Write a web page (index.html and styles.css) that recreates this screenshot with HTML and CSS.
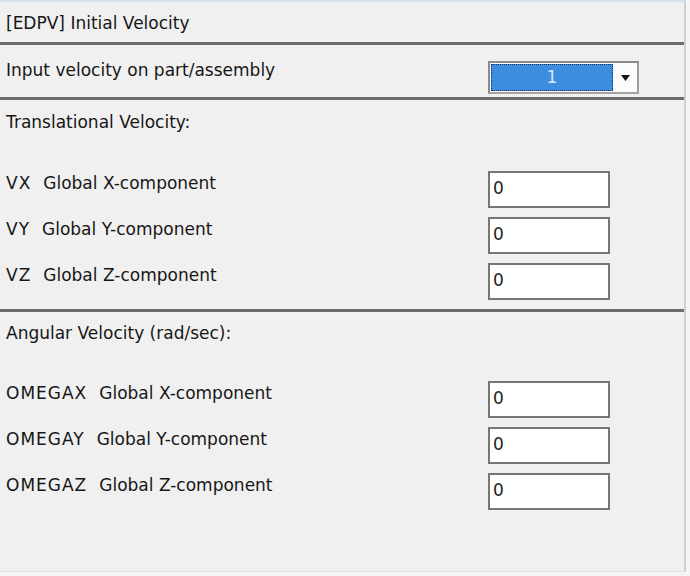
FILE: index.html
```html
<!DOCTYPE html>
<html lang="en">
<head>
<meta charset="utf-8">
<title>[EDPV] Initial Velocity</title>
<link rel="stylesheet" href="styles.css">
</head>
<body>
<div class="panel">
  <div class="title">[EDPV] Initial Velocity</div>
  <div class="sep"></div>
  <div class="part-row">
    <div class="part-label">Input velocity on part/assembly</div>
    <div class="combo">
      <div class="combo-value">1</div>
      <div class="combo-btn">
        <svg width="9" height="6" viewBox="0 0 9 6"><path d="M0 0H9L4.5 6Z" fill="#111"/></svg>
      </div>
    </div>
  </div>
  <div class="sep"></div>
  <div class="group">
    <div class="group-head">Translational Velocity:</div>
    <div class="rows">
      <div class="label"><span class="code">VX</span>Global X-component</div><div class="field">0</div>
      <div class="label"><span class="code">VY</span>Global Y-component</div><div class="field">0</div>
      <div class="label"><span class="code">VZ</span>Global Z-component</div><div class="field">0</div>
    </div>
  </div>
  <div class="sep"></div>
  <div class="group group-last">
    <div class="group-head">Angular Velocity (rad/sec):</div>
    <div class="rows">
      <div class="label"><span class="code">OMEGAX</span>Global X-component</div><div class="field">0</div>
      <div class="label"><span class="code">OMEGAY</span>Global Y-component</div><div class="field">0</div>
      <div class="label"><span class="code">OMEGAZ</span>Global Z-component</div><div class="field">0</div>
    </div>
  </div>
</div>
</body>
</html>
```
FILE: styles.css
```css
html, body {
  margin: 0;
  padding: 0;
  background: #f5f5f5;
}
body {
  font-family: "DejaVu Sans", sans-serif;
  font-size: 17px;
  color: #161616;
}
.panel {
  width: 686px;
  height: 572px;
  box-sizing: border-box;
  border-top: 2px solid #d6e0ea;
  border-right: 2px solid #cfcfcf;
  border-bottom: 1px solid #e2e2e2;
  background: #f0f0f0;
  display: flex;
  flex-direction: column;
}
.title {
  height: 40px;
  box-sizing: border-box;
  padding: 10px 0 0 6px;
  line-height: 22px;
}
.sep {
  height: 3px;
  background: #6b6b6b;
  flex: none;
}
.part-row {
  height: 52px;
  box-sizing: border-box;
  display: flex;
  align-items: flex-start;
  padding-left: 6px;
}
.part-label {
  width: 482px;
  padding-top: 14px;
  line-height: 22px;
}
.combo {
  margin-top: 16px;
  width: 151px;
  height: 33px;
  box-sizing: border-box;
  border: 2px solid #8a8a8a;
  border-right-color: #9d9d9d;
  border-bottom-color: #a3a3a3;
  background: #fbfbfb;
  padding: 1px 0 1px 1px;
  display: flex;
}
.combo-value {
  flex: 1;
  background: #3c8de0;
  border: 1px dotted #1b2b4c;
  color: #d6eaff;
  text-align: center;
  line-height: 25px;
}
.combo-btn {
  width: 24px;
  display: flex;
  align-items: center;
  justify-content: center;
}
.group {
  height: 209px;
  box-sizing: border-box;
  padding: 11px 0 0 6px;
}
.group-last {
  flex: 1;
  height: auto;
  padding-top: 10px;
}
.group-head {
  line-height: 22px;
  margin-bottom: 38px;
}
.group-last .group-head {
  margin-bottom: 37px;
}
.rows {
  display: grid;
  grid-template-columns: 482px 122px;
  grid-auto-rows: 37px;
  row-gap: 9px;
}
.label {
  line-height: 22px;
  padding-top: 1px;
}
.code {
  letter-spacing: 1px;
  margin-right: 12px;
}
.field {
  box-sizing: border-box;
  border: 2px solid #767676;
  background: #ffffff;
  padding: 4px 0 0 3px;
  line-height: 22px;
  color: #222;
}
```
